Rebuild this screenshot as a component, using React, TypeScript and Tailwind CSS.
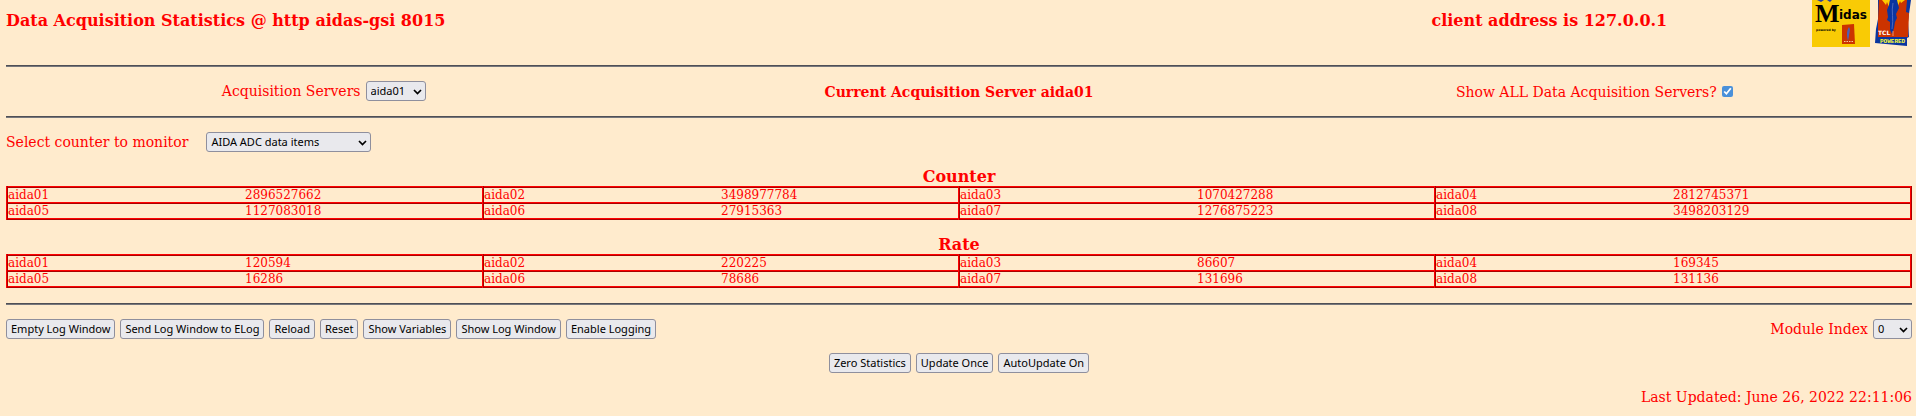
import React, { useState } from 'react';

interface Item {
  name: string;
  counter: string;
  rate: string;
}

const items: Item[] = [
  { name: 'aida01', counter: '2896527662', rate: '120594' },
  { name: 'aida02', counter: '3498977784', rate: '220225' },
  { name: 'aida03', counter: '1070427288', rate: '86607' },
  { name: 'aida04', counter: '2812745371', rate: '169345' },
  { name: 'aida05', counter: '1127083018', rate: '16286' },
  { name: 'aida06', counter: '27915363', rate: '78686' },
  { name: 'aida07', counter: '1276875223', rate: '131696' },
  { name: 'aida08', counter: '3498203129', rate: '131136' },
];

const rows = [items.slice(0, 4), items.slice(4)];

const logButtons = [
  'Empty Log Window',
  'Send Log Window to ELog',
  'Reload',
  'Reset',
  'Show Variables',
  'Show Log Window',
  'Enable Logging',
];

const statButtons = ['Zero Statistics', 'Update Once', 'AutoUpdate On'];

function Rule() {
  return <hr className="h-0.5 border-t border-b border-t-[#4f4f55] border-b-[#77777c]" />;
}

function Button({ children }: { children: React.ReactNode }) {
  return (
    <button
      type="button"
      className="h-5 rounded-[3px] border border-[#8f8f9d] bg-[#e9e9ed] px-1 font-['Noto_Sans',sans-serif] text-[11px] leading-[18px] text-black hover:bg-[#d0d0d7]"
    >
      {children}
    </button>
  );
}

function Select({ id, options, width }: { id: string; options: string[]; width: string }) {
  return (
    <span className={`relative inline-block h-5 ${width}`}>
      <select
        id={id}
        className="block h-5 w-full appearance-none rounded-[3px] border border-[#8f8f9d] bg-[#e9e9ed] pl-1 font-['Noto_Sans',sans-serif] text-[11px] leading-[18px] text-black"
      >
        {options.map((o) => (
          <option key={o}>{o}</option>
        ))}
      </select>
      <svg className="pointer-events-none absolute top-2 right-1 h-[6px] w-[9px]" viewBox="0 0 9 6" fill="none" stroke="#000" strokeWidth="1.7">
        <path d="M1 1l3.5 3.5L8 1" />
      </svg>
    </span>
  );
}

function StatsTable({ title, field }: { title: string; field: 'counter' | 'rate' }) {
  return (
    <table className="w-full table-fixed border-collapse border-2 border-[#f00] text-[12px] leading-[14px] [border-style:ridge]">
      <caption className="text-[16px] leading-[18px] font-bold">{title}</caption>
      <tbody>
        {rows.map((row) => (
          <tr key={row[0].name} className="border-y-2 border-[#f00] [border-style:ridge]">
            {row.map((item) => (
              <React.Fragment key={item.name}>
                <td className="border-l-2 border-[#f00] p-0 [border-left-style:ridge]">{item.name}</td>
                <td className="border-r-2 border-[#f00] p-0 [border-right-style:ridge]">{item[field]}</td>
              </React.Fragment>
            ))}
          </tr>
        ))}
      </tbody>
    </table>
  );
}

function MidasLogo() {
  return (
    <svg className="h-[47px] w-[58px]" viewBox="0 0 58 47" role="img" aria-label="Midas">
      <rect width="58" height="47" fill="#f9cb05" />
      <path d="M5 0h7l-3 2z" fill="#2b3f9e" />
      <path d="M15 0h5l-2 2z" fill="#2b3f9e" />
      <text x="3" y="22" fontFamily="Liberation Serif, serif" fontWeight="700" fontSize="26">M</text>
      <text x="27" y="19" fontFamily="DejaVu Sans, sans-serif" fontWeight="700" fontSize="12">idas</text>
      <text x="4" y="31" fontFamily="DejaVu Sans, sans-serif" fontWeight="700" fontSize="3">powered by</text>
      <path d="M30 25l12-1 1 20H30z" fill="#cc3300" />
      <path d="M37 27c2 3 0 6 0 9l-1 5c-1-5-2-9 1-14z" fill="#4a5fb8" />
      <path d="M32 41.500h9" stroke="#f6c9a0" strokeDasharray="1.5 1" />
    </svg>
  );
}

function TclLogo() {
  return (
    <svg className="h-[47px] w-[36px]" viewBox="0 0 36 47" role="img" aria-label="Tcl powered">
      <path d="M3 0h33l-2 14-1 8 1 15-2 1v8L0 43l1-14 2-10z" fill="#0a35a0" />
      <path d="M4 0h28l-1 12 3 1-1 24H3V20z" fill="#cc3300" />
      <path d="M7 0l4 5 1-3 2 5 1-7zM30 0l-4 3-1-2-3 7-1-8z" fill="#fc0" />
      <path d="M15 0l-1 5-2 5 1 7-1 3 3 2v8l2 4 2-6 1-6 2-4-1-4 3-6-1-4-1-4z" fill="#0a35a0" />
      <path d="M18 3c-2 8 1 16-1 26" fill="none" stroke="#4a68bd" />
      <path d="M18 31v5" stroke="#f3c0a8" strokeWidth=".7" />
      <text x="3" y="35" fontFamily="DejaVu Sans, sans-serif" fontSize="6" fontWeight="700" fill="#fff">TCL</text>
      <text x="5" y="43" fontFamily="Liberation Mono, monospace" fontSize="6" fontWeight="700" fill="#ff3">POWERED</text>
    </svg>
  );
}

export default function App() {
  const [showAll, setShowAll] = useState(true);

  return (
    <div className="min-h-screen bg-[#ffebcd] pr-1 pb-2 pl-1.5 font-['DejaVu_Serif',serif] text-[14px] leading-5 text-[#f00]">
      <header className="flex items-start pb-[18px] text-[16px] font-bold">
        <h1 className="w-2/3 pt-[11px]">Data Acquisition Statistics @ http aidas-gsi 8015</h1>
        <p className="flex-1 pt-[11px] pl-2.5 text-center">client address is 127.0.0.1</p>
        <div className="flex gap-[5px] pr-px">
          <MidasLogo />
          <TclLogo />
        </div>
      </header>
      <Rule />

      <div className="grid grid-cols-3 items-center py-3.5 text-center">
        <div className="flex justify-center gap-[5px] pb-px">
          <label htmlFor="server">Acquisition Servers</label>
          <Select id="server" width="w-[60px]" options={items.map((i) => i.name)} />
        </div>
        <strong>Current Acquisition Server aida01</strong>
        <div className="flex items-center justify-center gap-[5px]">
          <label htmlFor="show-all">Show ALL Data Acquisition Servers?</label>
          <input
            id="show-all"
            type="checkbox"
            checked={showAll}
            onChange={(e) => setShowAll(e.target.checked)}
            className="size-[11px] accent-[#4a90d9]"
          />
        </div>
      </div>
      <Rule />

      <div className="flex gap-[18px] pt-3.5 pb-4">
        <label htmlFor="counter">Select counter to monitor</label>
        <Select id="counter" width="w-[165px]" options={['AIDA ADC data items']} />
      </div>

      <main className="flex flex-col gap-4 pb-[15px]">
        <StatsTable title="Counter" field="counter" />
        <StatsTable title="Rate" field="rate" />
      </main>
      <Rule />

      <div className="flex justify-between pt-3.5">
        <div className="flex gap-[5px]">
          {logButtons.map((b) => (
            <Button key={b}>{b}</Button>
          ))}
        </div>
        <div className="flex gap-[5px]">
          <label htmlFor="module">Module Index</label>
          <Select id="module" width="w-[39px]" options={['0', '1', '2', '3']} />
        </div>
      </div>

      <div className="flex justify-center gap-[5px] py-3.5">
        {statButtons.map((b) => (
          <Button key={b}>{b}</Button>
        ))}
      </div>

      <p className="text-right">Last Updated: June 26, 2022 22:11:06</p>
    </div>
  );
}
